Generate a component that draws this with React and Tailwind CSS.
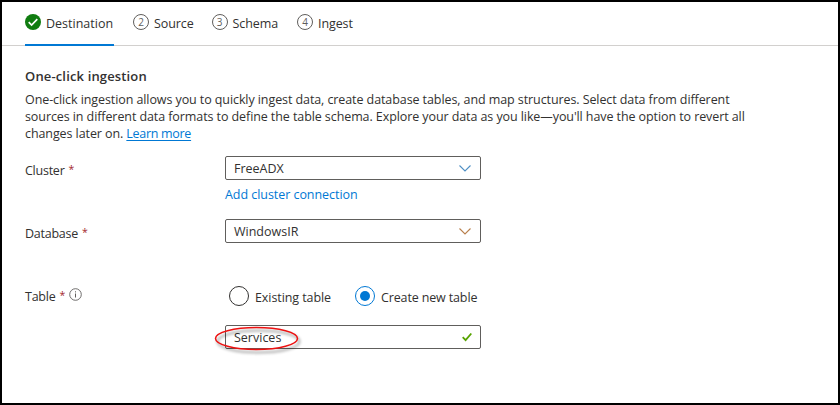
import React from "react";

const steps = [
  { n: 2, label: "Source", className: "ml-[19px]", text: "tracking-[-0.1px]" },
  { n: 3, label: "Schema", className: "ml-[18px]", text: "tracking-[-0.1px]" },
  { n: 4, label: "Ingest", className: "ml-[19px]", text: "tracking-[-0.1px]" },
];

function Chevron({ color }) {
  return (
    <svg width="14" height="14" viewBox="0 0 14 14" fill="none" className="mr-[8px] shrink-0">
      <path d="M1.5 4.5 L7 10 L12.5 4.5" stroke={color} strokeWidth="1.1" />
    </svg>
  );
}

function Field({ value, children }) {
  return (
    <div className="relative flex h-6 w-64 items-center justify-between rounded-[2px] border border-[#605e5c] bg-white pl-2">
      <span className="pt-[2px] leading-[18px]">{value}</span>
      {children}
    </div>
  );
}

function Label({ children, info }) {
  return (
    <div className="flex w-[200px] shrink-0 leading-[18px]">
      <span className="tracking-[-0.25px]">{children}</span>
      <span className="ml-[4px] text-[10.5px] leading-[14px] text-[#a4262c]">*</span>
      {info && (
        <svg width="13" height="13" viewBox="0 0 13 13" fill="none" className="ml-[4px]">
          <circle cx="6.5" cy="6.5" r="5.8" stroke="#605e5c" strokeWidth="0.9" />
          <path d="M6.5 5.5V9.5M6.5 3.3V4.4" stroke="#605e5c" strokeWidth="1" />
        </svg>
      )}
    </div>
  );
}

export default function App() {
  return (
    <div className="h-[405px] w-[840px] overflow-hidden border-2 border-black bg-white font-['Open_Sans','Noto_Sans',sans-serif] text-[12.5px] whitespace-nowrap text-[#323130]">
      <header className="flex h-[44px] items-stretch border-b border-[#d2d0ce] pl-[23px]">
        <div className="-mb-px flex h-[44px] w-[89px] items-start border-b-2 border-[#0078d4] pt-[12px]">
          <svg width="16" height="16" viewBox="0 0 16 16" fill="none" className="shrink-0">
            <circle cx="8" cy="8" r="8" fill="#107c10" />
            <path d="M3.7 8.1 L6.6 11 L12.3 5.2" stroke="white" strokeWidth="1.7" />
          </svg>
          <span className="ml-[5px] pt-px leading-[18px]">Destination</span>
        </div>
        {steps.map((s) => (
          <div key={s.n} className={"flex items-start pt-[12px] " + s.className}>
            <span className="flex size-4 shrink-0 items-center justify-center rounded-full border border-[#605e5c] text-[10px] leading-none text-[#605e5c]">
              {s.n}
            </span>
            <span className={"ml-[5px] pt-px leading-[18px] " + s.text}>{s.label}</span>
          </div>
        ))}
      </header>
      <main className="px-[23px] pt-[21px]">
        <h1 className="h-[24px] text-[13px] leading-[18px] font-semibold tracking-[0.15px]">One-click ingestion</h1>
        <div className="leading-[17px] tracking-[-0.087px]">
          <p>One-click ingestion allows you to quickly ingest data, create database tables, and map structures. Select data from different</p>
          <p>sources in different data formats to define the table schema. Explore your data as you like—you'll have the option to revert all</p>
          <p>
            changes later on. <a className="tracking-[-0.3px] text-[#0078d4] underline underline-offset-2">Learn more</a>
          </p>
        </div>
        <div className="mt-[14px] flex h-[63px]">
          <div className="pt-[6px]"><Label>Cluster</Label></div>
          <div>
            <Field value="FreeADX"><Chevron color="#4f8fc4" /></Field>
            <a className="mt-[6px] block leading-[18px] tracking-[-0.05px] text-[#0078d4]">Add cluster connection</a>
          </div>
        </div>
        <div className="flex h-[67px]">
          <div className="pt-[6px]"><Label>Database</Label></div>
          <Field value="WindowsIR"><Chevron color="#b87f4c" /></Field>
        </div>
        <div className="flex">
          <div className="pt-[2px]"><Label info>Table</Label></div>
          <div>
            <div className="flex h-[39px] items-start pl-[4px]">
              <span className="size-5 shrink-0 rounded-full border border-[#323130]" />
              <span className="ml-[6px] w-[100px] pt-[3px] leading-[18px] tracking-[-0.08px]">Existing table</span>
              <span className="flex size-5 shrink-0 items-center justify-center rounded-full border border-[#0078d4]">
                <span className="size-[10px] rounded-full bg-[#0078d4]" />
              </span>
              <span className="ml-[6px] pt-[3px] leading-[18px] tracking-[-0.14px]">Create new table</span>
            </div>
            <Field value="Services">
              <svg width="10" height="10" viewBox="0 0 10 10" fill="none" className="mr-[8px]">
                <path d="M0.7 5.2 L3.6 8.1 L9.3 1.5" stroke="#57a300" strokeWidth="1.8" />
              </svg>
              <svg width="92" height="34" viewBox="0 0 92 34" fill="none" className="absolute top-[-1px] left-[-13px] drop-shadow-[2px_3px_1.5px_rgba(0,0,0,0.45)]">
                <ellipse cx="43.5" cy="13.5" rx="41" ry="11" stroke="#ed1111" strokeWidth="1.5" />
              </svg>
            </Field>
          </div>
        </div>
      </main>
    </div>
  );
}
